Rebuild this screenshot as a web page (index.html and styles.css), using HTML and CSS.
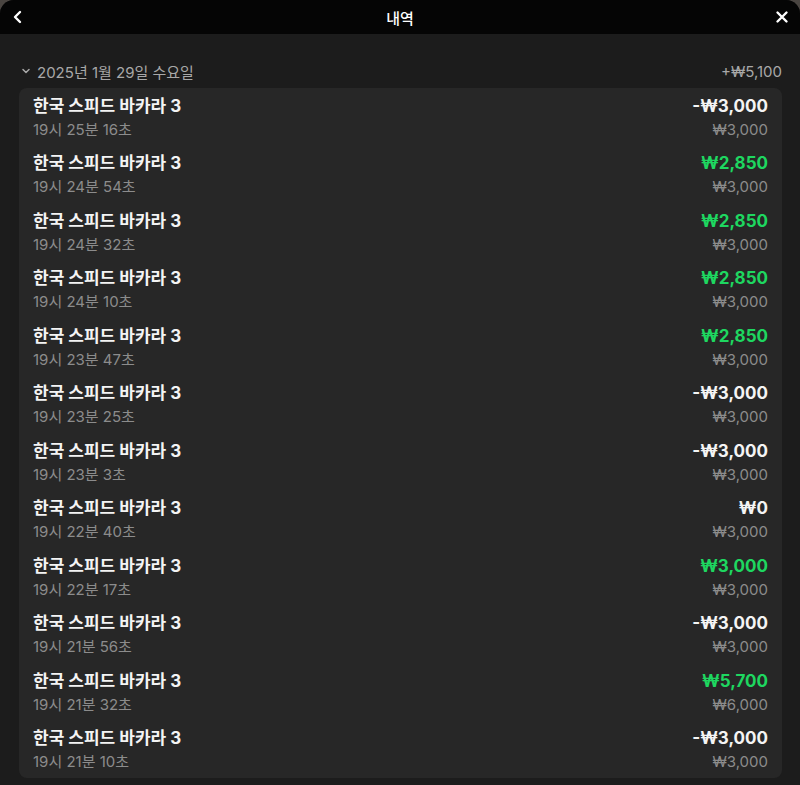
FILE: index.html
```html
<!DOCTYPE html>
<html lang="ko">
<head>
    <meta charset="UTF-8">
    <meta name="viewport" content="width=device-width, initial-scale=1.0">
    <title>내역</title>
    <link rel="stylesheet" href="styles.css">
</head>
<body>
    <div class="modal">
        <header class="topbar">
            <button class="icon-btn" aria-label="뒤로">
                <svg width="14" height="14" viewBox="0 0 14 14"><path d="M9 2 L4 7 L9 12" fill="none" stroke="#fff" stroke-width="2.4" stroke-linecap="round" stroke-linejoin="round"/></svg>
            </button>
            <h1>내역</h1>
            <button class="icon-btn" aria-label="닫기">
                <svg width="14" height="14" viewBox="0 0 14 14"><path d="M2.5 2.5 L11.5 11.5 M11.5 2.5 L2.5 11.5" fill="none" stroke="#fff" stroke-width="2.4" stroke-linecap="round"/></svg>
            </button>
        </header>

        <main class="content">
            <div class="day-head">
                <span class="day-label">
                    <svg width="10" height="10" viewBox="0 0 10 10"><path d="M2 3.5 L5 6.5 L8 3.5" fill="none" stroke="#a8a8a8" stroke-width="1.5" stroke-linecap="round" stroke-linejoin="round"/></svg>
                    2025년 1월 29일 수요일
                </span>
                <span class="day-total">+₩5,100</span>
            </div>

            <div class="card">
                <div class="row">
                    <div class="left"><div class="title">한국 스피드 바카라 3</div><div class="sub">19시 25분 16초</div></div>
                    <div class="right"><div class="amount">-₩3,000</div><div class="sub">₩3,000</div></div>
                </div>
                <div class="row">
                    <div class="left"><div class="title">한국 스피드 바카라 3</div><div class="sub">19시 24분 54초</div></div>
                    <div class="right"><div class="amount win">₩2,850</div><div class="sub">₩3,000</div></div>
                </div>
                <div class="row">
                    <div class="left"><div class="title">한국 스피드 바카라 3</div><div class="sub">19시 24분 32초</div></div>
                    <div class="right"><div class="amount win">₩2,850</div><div class="sub">₩3,000</div></div>
                </div>
                <div class="row">
                    <div class="left"><div class="title">한국 스피드 바카라 3</div><div class="sub">19시 24분 10초</div></div>
                    <div class="right"><div class="amount win">₩2,850</div><div class="sub">₩3,000</div></div>
                </div>
                <div class="row">
                    <div class="left"><div class="title">한국 스피드 바카라 3</div><div class="sub">19시 23분 47초</div></div>
                    <div class="right"><div class="amount win">₩2,850</div><div class="sub">₩3,000</div></div>
                </div>
                <div class="row">
                    <div class="left"><div class="title">한국 스피드 바카라 3</div><div class="sub">19시 23분 25초</div></div>
                    <div class="right"><div class="amount">-₩3,000</div><div class="sub">₩3,000</div></div>
                </div>
                <div class="row">
                    <div class="left"><div class="title">한국 스피드 바카라 3</div><div class="sub">19시 23분 3초</div></div>
                    <div class="right"><div class="amount">-₩3,000</div><div class="sub">₩3,000</div></div>
                </div>
                <div class="row">
                    <div class="left"><div class="title">한국 스피드 바카라 3</div><div class="sub">19시 22분 40초</div></div>
                    <div class="right"><div class="amount">₩0</div><div class="sub">₩3,000</div></div>
                </div>
                <div class="row">
                    <div class="left"><div class="title">한국 스피드 바카라 3</div><div class="sub">19시 22분 17초</div></div>
                    <div class="right"><div class="amount win">₩3,000</div><div class="sub">₩3,000</div></div>
                </div>
                <div class="row">
                    <div class="left"><div class="title">한국 스피드 바카라 3</div><div class="sub">19시 21분 56초</div></div>
                    <div class="right"><div class="amount">-₩3,000</div><div class="sub">₩3,000</div></div>
                </div>
                <div class="row">
                    <div class="left"><div class="title">한국 스피드 바카라 3</div><div class="sub">19시 21분 32초</div></div>
                    <div class="right"><div class="amount win">₩5,700</div><div class="sub">₩6,000</div></div>
                </div>
                <div class="row">
                    <div class="left"><div class="title">한국 스피드 바카라 3</div><div class="sub">19시 21분 10초</div></div>
                    <div class="right"><div class="amount">-₩3,000</div><div class="sub">₩3,000</div></div>
                </div>
            </div>
        </main>
    </div>
</body>
</html>
```

FILE: styles.css
```css
/* General */
html, body {
    margin: 0;
    padding: 0;
    height: 100%;
    overflow: hidden;
}

body {
    background: #4a4541;
    font-family: Inter, "Noto Sans CJK KR", sans-serif;
    color: #f2f2f2;
}

.modal {
    height: 100%;
    background: #1c1c1c;
    border-radius: 14px 14px 0 0;
    overflow: hidden;
}

/* Top bar */
.topbar {
    height: 34px;
    background: #050505;
    display: flex;
    align-items: center;
    justify-content: space-between;
    padding: 0 10px;
}

.topbar h1 {
    margin: 0;
    font-size: 15px;
    font-weight: 500;
    color: #fff;
}

.icon-btn {
    width: 16px;
    height: 16px;
    padding: 0;
    border: none;
    background: none;
    display: flex;
    align-items: center;
    justify-content: center;
}

/* Content */
.content {
    padding: 25px 18px 0 19px;
}

.day-head {
    display: flex;
    justify-content: space-between;
    align-items: center;
    height: 24px;
    margin-bottom: 5px;
    font-size: 15px;
    color: #a8a8a8;
}

.day-label {
    display: flex;
    align-items: center;
    gap: 6px;
    padding-left: 2px;
}

.card {
    background: #272727;
    border-radius: 8px;
}

.row {
    display: flex;
    justify-content: space-between;
    padding: 6.5px 14px 6px 14px;
}

.title, .amount {
    font-size: 17px;
    font-weight: 700;
    line-height: 22px;
    color: #f4f4f4;
}

.amount {
    text-align: right;
}

.amount.win {
    color: #1ed760;
}

.sub {
    margin-top: 3px;
    font-size: 15px;
    line-height: 20px;
    color: #8c8c8c;
}

.right .sub {
    text-align: right;
}
```
